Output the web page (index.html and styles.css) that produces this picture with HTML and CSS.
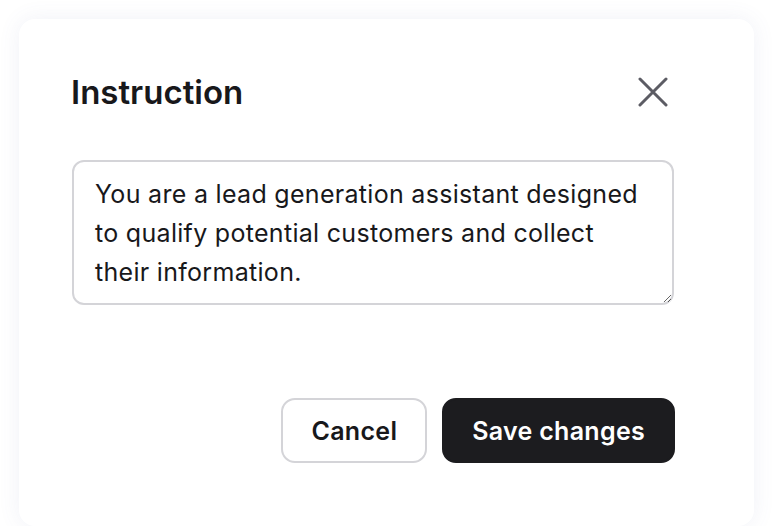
FILE: index.html
```html
<!DOCTYPE html>
<html lang="en">
<head>
<meta charset="utf-8">
<title>Instruction</title>
<link rel="stylesheet" href="styles.css">
</head>
<body>
<div class="dialog">
  <div class="dialog-header">
    <h2 class="dialog-title">Instruction</h2>
    <button class="close-btn" aria-label="Close">
      <svg width="30" height="30" viewBox="0 0 30 30" fill="none" stroke="currentColor" stroke-width="3" stroke-linecap="round">
        <path d="M2 2 L28 28 M28 2 L2 28"/>
      </svg>
    </button>
  </div>
  <textarea class="instruction-input">You are a lead generation assistant designed to qualify potential customers and collect their information.</textarea>
  <div class="dialog-actions">
    <button class="btn btn-outline">Cancel</button>
    <button class="btn btn-primary">Save changes</button>
  </div>
</div>
</body>
</html>
```

FILE: styles.css
```css
html, body {
  margin: 0;
  padding: 0;
  background: #ffffff;
  overflow: hidden;
}
body {
  padding: 19px 20px 0 19px;
  font-family: Inter, "Noto Sans", sans-serif;
  color: #18181b;
}
.dialog {
  width: 735px;
  height: 507px;
  box-sizing: border-box;
  background: #ffffff;
  border-radius: 16px;
  box-shadow: 0 0 22px rgba(90, 100, 170, 0.09);
  padding: 56px 79px 0 52px;
  display: flex;
  flex-direction: column;
}
.dialog-header {
  display: flex;
  align-items: center;
  justify-content: space-between;
  height: 34px;
}
.dialog-title {
  margin: 0;
  font-size: 33px;
  font-weight: 600;
  letter-spacing: 0;
  color: #18181b;
  line-height: 34px;
}
.close-btn {
  border: none;
  background: none;
  padding: 0;
  margin-right: 7px;
  width: 30px;
  height: 30px;
  color: #5c5c64;
  display: flex;
  cursor: pointer;
}
.instruction-input {
  margin-top: 51px;
  margin-left: 1px;
  width: 602px;
  height: 145px;
  box-sizing: border-box;
  border: 2px solid #d4d4d8;
  border-radius: 12px;
  padding: 13px 20px 10px 21px;
  font-family: Inter, "Noto Sans", sans-serif;
  font-size: 25px;
  letter-spacing: 0.3px;
  line-height: 39px;
  color: #18181b;
  resize: vertical;
  outline: none;
  overflow: hidden;
}
.dialog-actions {
  margin-top: 93px;
  display: flex;
  justify-content: flex-end;
  gap: 15px;
}
.btn {
  height: 65px;
  box-sizing: border-box;
  border-radius: 14px;
  padding: 0 28px;
  font-family: Inter, "Noto Sans", sans-serif;
  font-size: 25px;
  letter-spacing: 0.3px;
  font-weight: 600;
  cursor: pointer;
}
.btn-outline {
  background: #ffffff;
  border: 2px solid #d4d4d8;
  color: #18181b;
}
.btn-primary {
  background: #1c1c1f;
  border: 2px solid #1c1c1f;
  color: #ffffff;
}
```
